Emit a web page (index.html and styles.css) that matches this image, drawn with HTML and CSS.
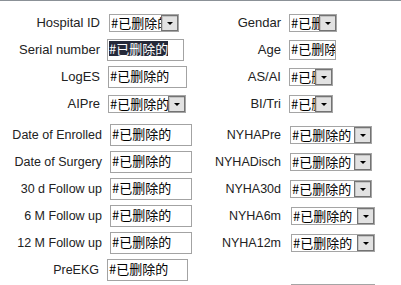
FILE: index.html
```html
<!DOCTYPE html>
<html lang="en">
<head>
    <meta charset="UTF-8">
    <meta name="viewport" content="width=device-width, initial-scale=1.0">
    <title>Patient Record</title>
    <link rel="stylesheet" href="styles.css">
</head>
<body>
    <div class="topline"></div>

    <form class="record">

        <div class="section">
            <div class="row">
                <label class="label">Hospital ID</label>
                <div class="select w-70"><span class="select-value">#已删除的</span><span class="select-arrow"></span></div>
                <label class="label">Gendar</label>
                <div class="select w-48"><span class="select-value">#已删除的</span><span class="select-arrow"></span></div>
            </div>
            <div class="row">
                <label class="label">Serial number</label>
                <div class="field w-77 shift-left"><span class="selected">#已删除的</span></div>
                <label class="label">Age</label>
                <div class="field field-short w-47">#已删除的</div>
            </div>
            <div class="row">
                <label class="label">LogES</label>
                <div class="field w-79">#已删除的</div>
                <label class="label">AS/AI</label>
                <div class="select w-44"><span class="select-value">#已删除的</span><span class="select-arrow"></span></div>
            </div>
            <div class="row">
                <label class="label">AIPre</label>
                <div class="select w-78"><span class="select-value">#已删除的</span><span class="select-arrow"></span></div>
                <label class="label">BI/Tri</label>
                <div class="select w-44"><span class="select-value">#已删除的</span><span class="select-arrow"></span></div>
            </div>
        </div>

        <div class="section section-dates">
            <div class="row">
                <label class="label">Date of Enrolled</label>
                <div class="field w-82">#已删除的</div>
                <label class="label">NYHAPre</label>
                <div class="select w-82"><span class="select-value">#已删除的</span><span class="select-arrow"></span></div>
            </div>
            <div class="row">
                <label class="label">Date of Surgery</label>
                <div class="field w-82">#已删除的</div>
                <label class="label">NYHADisch</label>
                <div class="select w-82"><span class="select-value">#已删除的</span><span class="select-arrow"></span></div>
            </div>
            <div class="row">
                <label class="label">30 d Follow up</label>
                <div class="field w-82">#已删除的</div>
                <label class="label">NYHA30d</label>
                <div class="select w-82"><span class="select-value">#已删除的</span><span class="select-arrow"></span></div>
            </div>
            <div class="row">
                <label class="label">6 M Follow up</label>
                <div class="field w-82">#已删除的</div>
                <label class="label">NYHA6m</label>
                <div class="select w-84 shift-right"><span class="select-value">#已删除的</span><span class="select-arrow"></span></div>
            </div>
            <div class="row">
                <label class="label">12 M Follow up</label>
                <div class="field w-82">#已删除的</div>
                <label class="label">NYHA12m</label>
                <div class="select w-84 shift-right"><span class="select-value">#已删除的</span><span class="select-arrow"></span></div>
            </div>
            <div class="row row-tight">
                <label class="label">PreEKG</label>
                <div class="field w-81">#已删除的</div>
                <span></span>
                <span></span>
            </div>
            <div class="row row-last">
                <span></span>
                <span></span>
                <span></span>
                <div class="select w-84 shift-right"><span class="select-value">#已删除的</span><span class="select-arrow"></span></div>
            </div>
        </div>

    </form>
</body>
</html>
```

FILE: styles.css
```css
body {
    margin: 0;
    background-color: #fff;
    font-family: 'Liberation Sans', Arial, sans-serif;
    font-size: 13px;
    color: #222;
}

.topline {
    height: 1px;
    background-color: #8b9197;
}

.record {
    margin: 0;
}

.section {
    padding-top: 8px;
}

.section-dates {
    padding-top: 4px;
}

.row {
    display: grid;
    grid-template-columns: 108px 92px 89px 1fr;
    align-items: center;
    height: 27px;
}

.section-dates .row {
    grid-template-columns: 110px 90px 90px 1fr;
}

.section-dates .row.row-tight {
    grid-template-columns: 107px 93px 90px 1fr;
}

.row-last {
    align-items: start;
    margin-top: 1px;
}

.label {
    text-align: right;
    padding-right: 8px;
    white-space: nowrap;
    line-height: 16px;
}

.section-dates .label {
    font-size: 12.5px;
}

.section-dates .row .label:nth-child(3) {
    padding-right: 9px;
}

.field,
.select {
    box-sizing: border-box;
    background-color: #fff;
    font-family: 'Noto Sans CJK SC', sans-serif;
    font-size: 13px;
    color: #000;
    white-space: nowrap;
    overflow: hidden;
}

.field {
    height: 22px;
    border: 1px solid #a3a3a3;
    padding: 1px 0 0 1px;
    line-height: 16px;
}

.field-short {
    height: 20px;
    padding-top: 0;
}

.selected {
    display: inline-block;
    background-color: #252939;
    color: #fff;
    line-height: 15px;
}

.select {
    display: flex;
    height: 18px;
    border: 1px solid #a5a5a5;
}

.select-value {
    flex: 1;
    min-width: 0;
    overflow: hidden;
    padding-left: 1px;
    line-height: 16px;
}

.select-arrow {
    flex: none;
    width: 17px;
    box-sizing: border-box;
    border: 1px solid #737373;
    background-color: #e2e2e2;
    box-shadow: inset 1px 1px 0 #c4c4c4;
    display: flex;
    align-items: center;
    justify-content: center;
}

.select-arrow::after {
    content: '';
    border-left: 3px solid transparent;
    border-right: 3px solid transparent;
    border-top: 3px solid #000;
    margin-top: 1px;
}

.shift-left {
    margin-left: -1px;
}

.shift-right {
    margin-left: 1px;
}

.w-44 { width: 44px; }
.w-47 { width: 47px; }
.w-48 { width: 48px; }
.w-70 { width: 70px; margin-left: 1px; }
.w-77 { width: 77px; }
.w-78 { width: 78px; }
.w-79 { width: 79px; }
.w-81 { width: 81px; }
.w-82 { width: 82px; }
.w-84 { width: 84px; }
```
